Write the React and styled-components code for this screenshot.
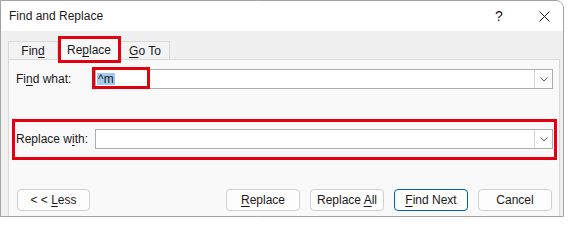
import React from 'react';
import styled, { createGlobalStyle } from 'styled-components';

const GlobalStyle = createGlobalStyle`
  html, body {
    margin: 0;
    padding: 0;
    background: #ffffff;
  }
  body {
    font-family: "Liberation Sans", Arial, sans-serif;
    font-size: 12px;
    color: #1a1a1a;
  }
`;

const Window = styled.div`
  position: relative;
  box-sizing: border-box;
  width: 564px;
  height: 217px;
  border: 1px solid #a3a3a3;
  border-top-right-radius: 8px;
  background: #f0f0f0;
  display: flex;
  flex-direction: column;
  overflow: hidden;
`;

const TitleBar = styled.div`
  height: 30px;
  flex-shrink: 0;
  display: flex;
  align-items: center;
  padding-left: 8px;
  background: #ffffff;
`;

const Title = styled.div`
  flex: 1;
  font-size: 12px;
`;

const CaptionButton = styled.div`
  width: ${p => p.$w}px;
  height: 30px;
  display: flex;
  align-items: center;
  justify-content: center;
  font-size: 14px;
  color: #1a1a1a;
`;

const TabStrip = styled.div`
  height: 28px;
  flex-shrink: 0;
  display: flex;
  align-items: flex-end;
  padding-left: 7px;
`;

const Tab = styled.div`
  position: relative;
  box-sizing: border-box;
  width: ${p => p.$w}px;
  height: ${p => (p.$active ? 22 : 18)}px;
  margin-bottom: ${p => (p.$active ? -1 : 0)}px;
  padding-top: ${p => (p.$active ? 1 : 0)}px;
  z-index: ${p => (p.$active ? 1 : 0)};
  display: flex;
  align-items: center;
  justify-content: center;
  border: 1px solid #d9d9d9;
  border-bottom: none;
  background: ${p => (p.$active ? '#f9f9f9' : '#f3f3f3')};
  font-size: 12px;
`;

const Key = styled.span`
  text-decoration: underline;
  text-underline-offset: 2px;
`;

const Panel = styled.div`
  flex: 1;
  margin: 0 3px 0 7px;
  padding: 9px 6px 0 7px;
  border: 1px solid #d9d9d9;
  border-bottom: none;
  background: #f9f9f9;
  display: flex;
  flex-direction: column;
`;

const FieldRow = styled.div`
  display: flex;
  align-items: center;
  height: 20px;
  margin-top: ${p => p.$gap || 0}px;
`;

const Label = styled.div`
  width: 79px;
  flex-shrink: 0;
  font-size: 12px;
`;

const ComboBox = styled.div`
  flex: 1;
  box-sizing: border-box;
  height: 20px;
  display: flex;
  align-items: stretch;
  border: 1px solid #adadad;
  background: #ffffff;
`;

const ComboText = styled.div`
  flex: 1;
  display: flex;
  align-items: center;
  padding-left: 1px;
  font-size: 12px;
`;

const Selected = styled.span`
  background: #a3cbee;
  padding: 0 1px;
  line-height: 12px;
`;

const DropButton = styled.div`
  width: 17px;
  display: flex;
  align-items: center;
  justify-content: center;
  border-left: 1px solid #d4d4d4;
  background: #ffffff;
`;

const ButtonRow = styled.div`
  display: flex;
  margin: 40px 1px 0 1px;
`;

const ButtonGroup = styled.div`
  display: flex;
  gap: 10px;
  margin-left: auto;
`;

const Button = styled.button`
  box-sizing: border-box;
  width: ${p => p.$w || 74}px;
  height: 22px;
  padding: 0;
  border: 1px solid ${p => (p.$primary ? '#005fb8' : '#d0d0d0')};
  border-radius: 4px;
  background: #fdfdfd;
  color: #1a1a1a;
  font-family: "Liberation Sans", Arial, sans-serif;
  font-size: 12px;
`;

const Annotation = styled.div`
  position: absolute;
  box-sizing: border-box;
  left: ${p => p.$x}px;
  top: ${p => p.$y}px;
  width: ${p => p.$w}px;
  height: ${p => p.$h}px;
  border: 3px solid #e3000f;
  pointer-events: none;
  z-index: 5;
`;

const Chevron = () => (
  <svg width="8" height="5" viewBox="0 0 8 5">
    <path d="M0.5 0.5 L4 4 L7.5 0.5" fill="none" stroke="#606060" strokeWidth="1" />
  </svg>
);

const CloseIcon = () => (
  <svg width="11" height="11" viewBox="0 0 11 11">
    <path d="M0.5 0.5 L10.5 10.5 M10.5 0.5 L0.5 10.5" fill="none" stroke="#1a1a1a" strokeWidth="1" />
  </svg>
);

export default function App() {
  return (
    <>
      <GlobalStyle />
      <Window>
        <TitleBar>
          <Title>Find and Replace</Title>
          <CaptionButton $w={52}>?</CaptionButton>
          <CaptionButton $w={38}><CloseIcon /></CaptionButton>
        </TitleBar>

        <TabStrip>
          <Tab $w={50}>Fin<Key>d</Key></Tab>
          <Tab $w={62} $active>Re<Key>p</Key>lace</Tab>
          <Tab $w={50}><Key>G</Key>o To</Tab>
        </TabStrip>

        <Panel>
          <FieldRow>
            <Label>Fi<Key>n</Key>d what:</Label>
            <ComboBox>
              <ComboText><Selected>^m</Selected></ComboText>
              <DropButton><Chevron /></DropButton>
            </ComboBox>
          </FieldRow>

          <FieldRow $gap={40}>
            <Label>Replace w<Key>i</Key>th:</Label>
            <ComboBox>
              <ComboText />
              <DropButton><Chevron /></DropButton>
            </ComboBox>
          </FieldRow>

          <ButtonRow>
            <Button $w={73}>&lt; &lt; <Key>L</Key>ess</Button>
            <ButtonGroup>
              <Button><Key>R</Key>eplace</Button>
              <Button>Replace <Key>A</Key>ll</Button>
              <Button $primary><Key>F</Key>ind Next</Button>
              <Button>Cancel</Button>
            </ButtonGroup>
          </ButtonRow>
        </Panel>

        <Annotation $x={57} $y={35} $w={63} $h={27} />
        <Annotation $x={91} $y={66} $w={58} $h={22} />
        <Annotation $x={11} $y={118} $w={545} $h={41} />
      </Window>
    </>
  );
}
